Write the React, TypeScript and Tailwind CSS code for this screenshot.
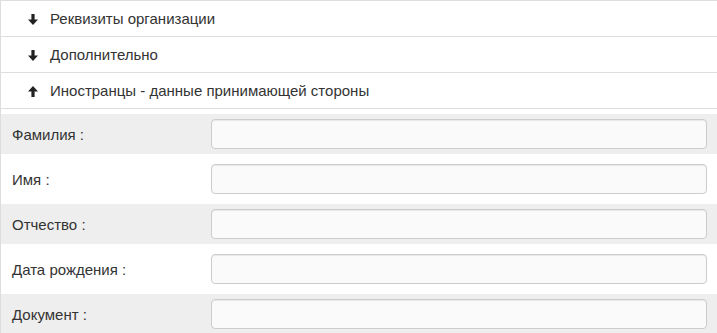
import React from "react";

const sections = [
  { label: "Реквизиты организации", open: false },
  { label: "Дополнительно", open: false },
  { label: "Иностранцы - данные принимающей стороны", open: true },
];

const fields = ["Фамилия :", "Имя :", "Отчество :", "Дата рождения :", "Документ :"];

function Arrow({ up }: { up?: boolean }) {
  return (
    <svg width="10" height="11" viewBox="0 0 10 11" className={up ? "rotate-180" : ""}>
      <path d="M3.4 0h3.2v5.5H10L5 11 0 5.5h3.4z" fill="#222" />
    </svg>
  );
}

export default function App() {
  return (
    <div
      className="w-[717px] h-[333px] overflow-hidden bg-white text-[15px] text-[#333] border-l border-[#ddd]"
      style={{ fontFamily: '"Liberation Sans", Arial, sans-serif' }}
    >
      {/* Collapsible section headers */}
      <div className="border-t border-[#ddd]">
        {sections.map((s) => (
          <div key={s.label} className="h-[36px] flex items-center border-b border-[#ddd] pl-[27px] pt-[2px]">
            <span className="w-[22px] flex">
              <Arrow up={s.open} />
            </span>
            <span>{s.label}</span>
          </div>
        ))}
      </div>

      {/* Form */}
      <div className="flex flex-col gap-[5px] pt-[5px]">
        {fields.map((f, i) => (
          <div
            key={f}
            className={`h-[40px] flex items-center ${i % 2 === 0 ? "bg-[#eeeeee]" : "bg-white"}`}
          >
            <label className="w-[210px] pl-[11px] pt-[2px]">{f}</label>
            <div className="flex-1 pr-[10px]">
              <input
                type="text"
                className="w-full h-[30px] rounded-[4px] border border-[#ccc] bg-[#fafafa] shadow-[inset_0_1px_1px_rgba(0,0,0,0.075)] outline-none"
              />
            </div>
          </div>
        ))}
      </div>
    </div>
  );
}
